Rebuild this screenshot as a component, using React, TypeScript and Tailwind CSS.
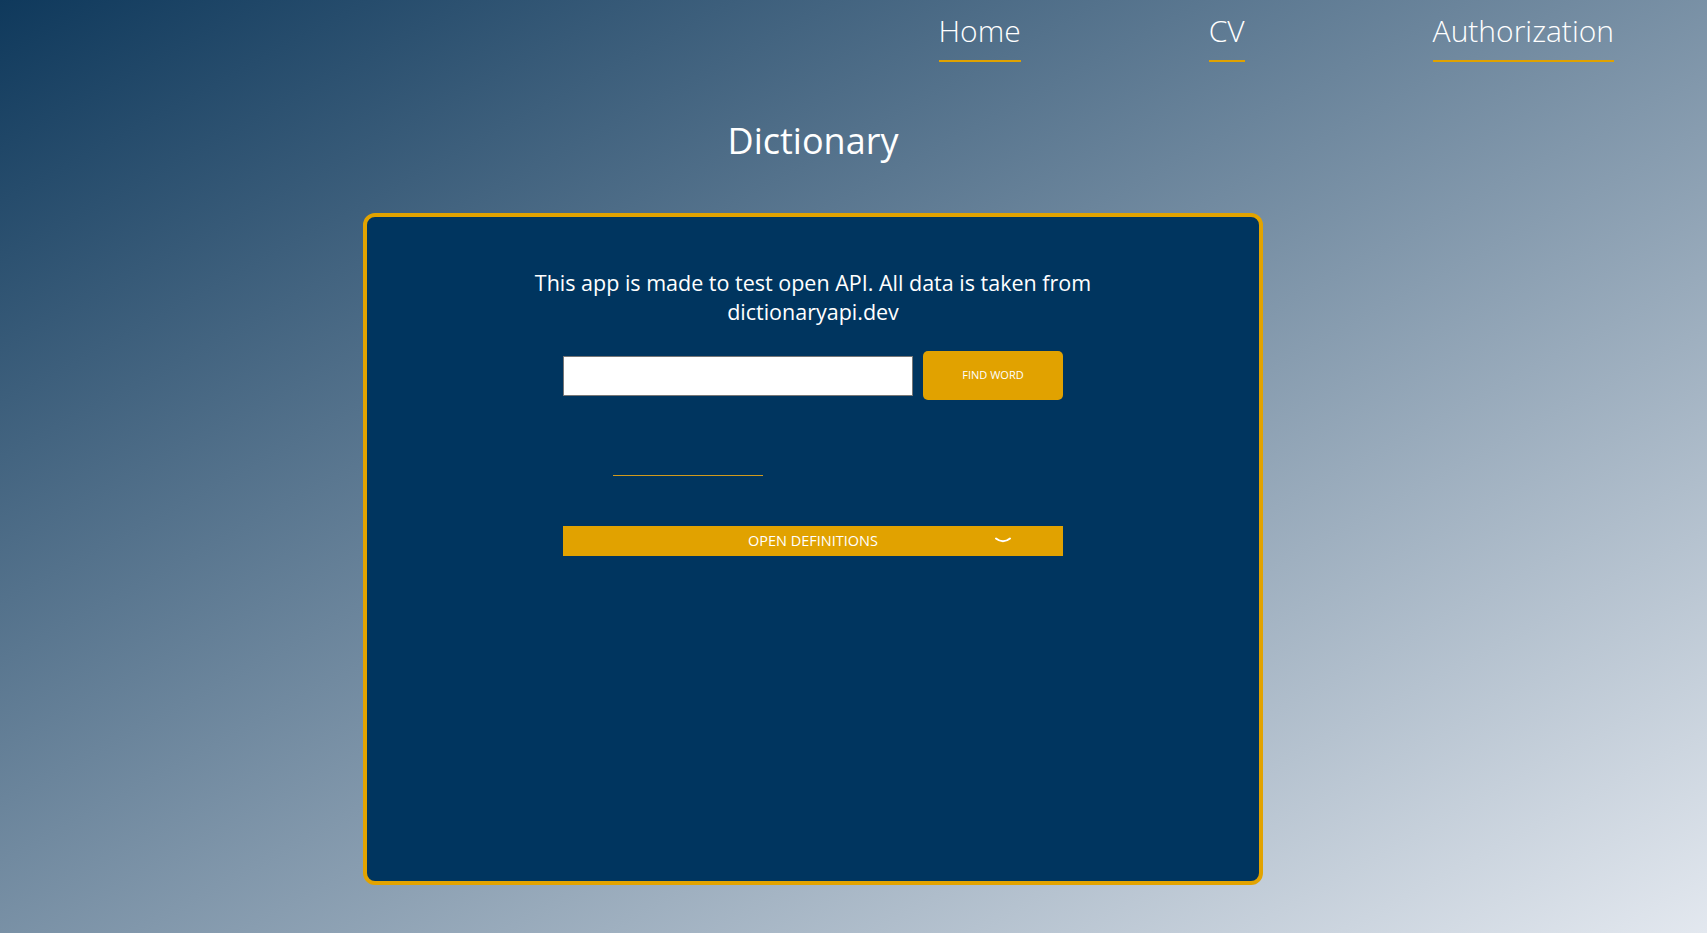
import { useState } from 'react';

// Pozycje w menu
const navItems = ['Home', 'CV', 'Authorization'];

export default function App() {
    const [word, setWord] = useState('');

    return (
        <div
            className="min-h-screen w-full bg-[linear-gradient(to_bottom_right,#0f395c,#e3e8ef)] text-white"
            style={{ fontFamily: '"Open Sans", "Noto Sans", sans-serif' }}
        >
            {/* Nawigacja */}
            <nav className="flex justify-end gap-[188px] pr-[93px] pt-[11px]">
                {navItems.map((item) => (
                    <a key={item} href="#" className="flex flex-col">
                        <span className="text-[30px] font-light leading-[40px]">{item}</span>
                        <span className="mt-[9px] h-[2px] w-full bg-[#e0a200]"></span>
                    </a>
                ))}
            </nav>

            <main className="flex flex-col items-center pr-[81px]">
                <h1 className="mt-[55px] text-[36px] leading-[48px]">Dictionary</h1>

                {/* Karta słownika */}
                <div className="mt-[48px] flex h-[672px] w-[900px] flex-col items-center rounded-[12px] border-4 border-[#e2a300] bg-[#00355f]">
                    <p className="mt-[51px] max-w-[600px] text-center text-[21.5px] leading-[29px]">
                        This app is made to test open API. All data is taken from dictionaryapi.dev
                    </p>

                    <div className="mt-[25px] flex w-[500px] flex-col">
                        <div className="flex items-center gap-[10px]">
                            <input
                                type="text"
                                value={word}
                                onChange={(e) => setWord(e.target.value)}
                                className="h-[40px] w-[350px] border border-[#767676] bg-white px-2 text-black outline-none"
                            />
                            <button className="h-[49px] w-[140px] rounded-[5px] bg-[#e1a200] text-[11px] text-white">
                                FIND WORD
                            </button>
                        </div>

                        <div className="mt-[75px] ml-[50px] h-px w-[150px] bg-[#d19a1c]"></div>

                        <button className="relative mt-[50px] flex h-[30px] w-full items-center justify-center bg-[#e1a200] text-[14.5px] text-white">
                            OPEN DEFINITIONS
                            <svg
                                className="absolute right-[52px] top-[11px]"
                                width="16"
                                height="7"
                                viewBox="0 0 16 7"
                                fill="none"
                                stroke="white"
                                strokeWidth="2"
                                strokeLinecap="round"
                            >
                                <path d="M1 1.5 Q8 7 15 1.5" />
                            </svg>
                        </button>
                    </div>
                </div>
            </main>
        </div>
    );
}
